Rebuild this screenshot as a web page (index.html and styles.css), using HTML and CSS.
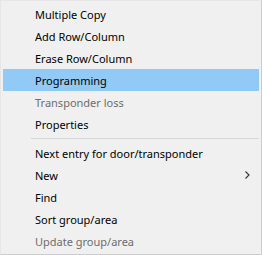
FILE: index.html
```html
<!DOCTYPE html>
<html>
<head>
<meta charset="utf-8">
<link rel="stylesheet" href="styles.css">
</head>
<body>
<div class="menu">
  <div class="item">Multiple Copy</div>
  <div class="item">Add Row/Column</div>
  <div class="item">Erase Row/Column</div>
  <div class="item active">Programming</div>
  <div class="item disabled">Transponder loss</div>
  <div class="item">Properties</div>
  <div class="sep"></div>
  <div class="item">Next entry for door/transponder</div>
  <div class="item">New<svg class="arrow" width="5" height="8" viewBox="0 0 5 8"><path d="M0.5 0.5 L4 4 L0.5 7.5" fill="none" stroke="#333" stroke-width="1.1"/></svg></div>
  <div class="item">Find</div>
  <div class="item">Sort group/area</div>
  <div class="item disabled">Update group/area</div>
</div>
</body>
</html>
```
FILE: styles.css
```css
html, body {
  margin: 0;
  padding: 0;
  background: #f0f0f0;
}
.menu {
  box-sizing: border-box;
  width: 262px;
  height: 255px;
  background: #f0f0f0;
  border: 1px solid #cccccc;
  border-top-color: #e6e6e6;
  border-left-color: #e6e6e6;
  padding: 2px 2px 1px 2px;
  display: flex;
  flex-direction: column;
  font-family: "Noto Sans", "DejaVu Sans", sans-serif;
  font-size: 11px;
  color: #000;
}
.item {
  height: 22px;
  display: flex;
  align-items: center;
  padding-left: 32px;
  position: relative;
  white-space: nowrap;
}
.item.active {
  background: #91c9f7;
}
.item.disabled {
  color: #6d6d6d;
}
.sep {
  height: 7px;
  display: flex;
  align-items: center;
  padding-left: 28px;
}
.sep::before {
  content: "";
  flex: 1;
  height: 1px;
  background: #d7d7d7;
}
.arrow {
  position: absolute;
  right: 9px;
  top: 7px;
}
```
